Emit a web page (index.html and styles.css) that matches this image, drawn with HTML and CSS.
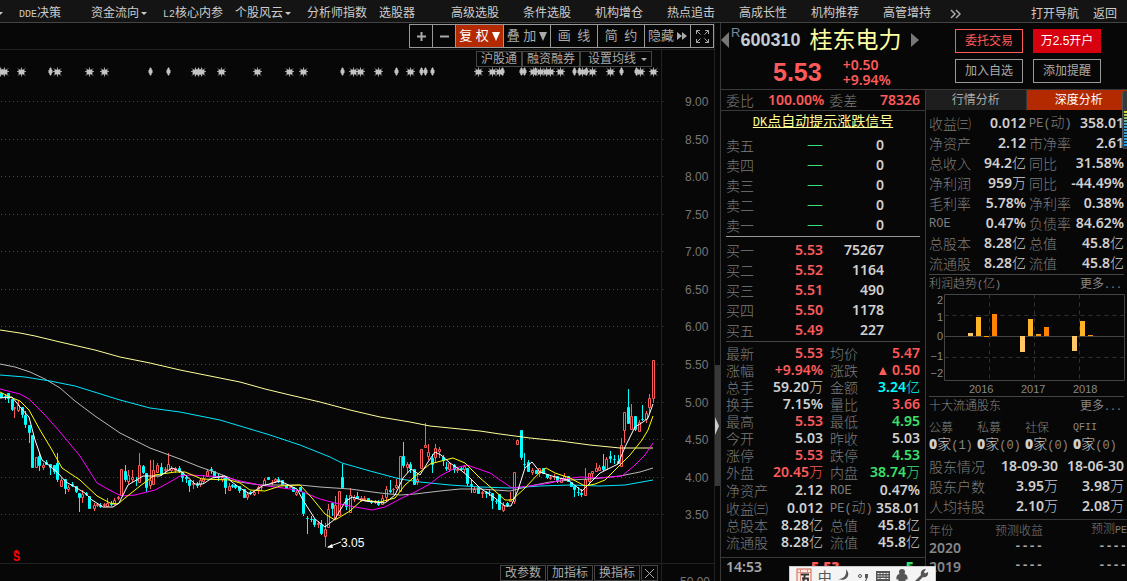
FILE: index.html
```html
<!DOCTYPE html>
<html lang="zh-CN">
<head>
<meta charset="utf-8">
<title>桂东电力 600310</title>
<link rel="stylesheet" href="styles.css">
</head>
<body>
<div class="app">
  <nav class="nav">
    <span class="nav-first caret"></span>
    <ul class="nav-list">
      <li><a href="#"><span class="en">DDE</span>决策</a></li>
      <li><a href="#">资金流向<i class="caret"></i></a></li>
      <li><a href="#"><span class="en">L2</span>核心内参</a></li>
      <li><a href="#">个股风云<i class="caret"></i></a></li>
      <li><a href="#">分析师指数</a></li>
      <li><a href="#">选股器</a></li>
      <li><a href="#">高级选股</a></li>
      <li><a href="#">条件选股</a></li>
      <li><a href="#">机构增仓</a></li>
      <li><a href="#">热点追击</a></li>
      <li><a href="#">高成长性</a></li>
      <li><a href="#">机构推荐</a></li>
      <li><a href="#">高管增持</a></li>
    </ul>
    <a class="nav-more" href="#" aria-label="更多">
      <svg width="11" height="10" viewBox="0 0 11 10"><path d="M1 1l4 4-4 4M6 1l4 4-4 4"/></svg>
    </a>
    <div class="nav-right"><a href="#">打开导航</a><a href="#">返回</a></div>
  </nav>

  <div class="main">
    <section class="chart">
      <div class="toolbar">
        <div class="tools">
          <button class="tool-s" aria-label="放大"><svg width="9" height="9" viewBox="0 0 9 9"><path class="ico2" d="M4.500 0v9M0 4.500h9"/></svg></button>
          <button class="tool-s" aria-label="缩小"><svg width="9" height="9" viewBox="0 0 9 9"><path class="ico2" d="M0 4.500h9"/></svg></button>
          <button class="tool-l on">复 权<i class="tri"></i></button>
          <button class="tool">叠 加<i class="tri"></i></button>
          <button class="tool">画&ensp;线</button>
          <button class="tool">简&ensp;约</button>
          <button class="tool-m">隐藏<svg width="10" height="8" viewBox="0 0 10 8"><path class="fill" d="M0 0l5 4-5 4zM5 0l5 4-5 4z"/></svg></button>
          <button class="tool-s" aria-label="全屏"><svg width="13" height="13" viewBox="0 0 13 13"><path class="ico1" d="M.5 4V.5H4M.5.5l4 4M9 .5h3.500V4M12.500.5l-4 4M.5 9v3.500H4M.5 12.500l4-4M9 12.500h3.500V9M12.500 12.500l-4-4"/></svg></button>
        </div>
      </div>
      <div class="chips-row">
        <div class="chips">
          <button class="chip">沪股通</button>
          <button class="chip">融资融券</button>
          <button class="chip wide">设置均线<i class="caret"></i></button>
        </div>
      </div>
      <svg class="plot" id="plot" viewBox="0 67 714 496" preserveAspectRatio="xMinYMin meet">
        <g id="grid"></g>
        <path class="axis" d="M661.500 67V563"/>
        <g id="labels"></g>
        <g id="stars"></g>
        <g id="candles"></g>
        <g class="ma">
          <polyline stroke="#ffff99" points="0,330 20,333 35,336 60,342 95,350 120,357 150,363 180,370 215,377 240,382 265,389 290,395 320,402 350,410 380,417 410,422 430,426 460,429 480,431 500,434 530,438 560,441 590,445 620,448 653,448"/>
          <polyline stroke="#b8b8b8" points="0,364 15,367 30,372 45,379 60,388 75,401 95,416 120,433 150,448 180,459 200,467 220,474 240,482 260,485 300,485 320,487 350,489 380,493 400,495 415,494 440,491 460,489 480,489 510,491 530,486 550,482 570,480 590,479 620,476 640,472 653,468"/>
          <polyline stroke="#00e5ff" points="0,375 25,377 50,381 75,386 120,400 150,408 180,412 220,420 240,426 270,435 300,445 330,457 342,463 370,471 400,479 420,482 450,485 480,487 510,488 540,486 570,485 600,486 625,485 653,480"/>
          <polyline stroke="#ff00ff" points="0,389 20,394 29,399 45,415 60,432 80,456 97,483 115,493 122,496 135,495 155,490 170,482 180,476 190,475 225,477 240,481 260,485 290,489 300,491 320,499 335,503 350,506 372,510 385,507 400,499 415,492 430,484 440,476 455,468 467,465 490,473 500,480 512,488 530,486 550,483 565,479 580,477 600,478 622,476 635,465 645,455 653,443"/>
          <polyline stroke="#ffff00" points="0,392 10,397 20,401 29,410 40,430 52,450 62,468 80,480 97,496 110,503 118,504 125,498 140,486 155,475 175,472 185,472 202,479 230,480 240,483 250,490 265,491 280,486 300,485 312,498 325,514 335,520 350,511 362,500 380,502 395,498 405,485 420,472 430,464 445,460 453,458 465,463 480,478 495,491 505,500 512,500 525,488 540,472 546,468 555,473 570,478 585,486 595,484 605,480 615,470 630,455 642,440 648,430 653,416"/>
          <polyline stroke="#ffffff" points="0,398 12,397 20,407 29,417 35,440 42,460 50,466 58,473 66,482 75,487 85,493 92,500 103,507 113,507 119,503 128,485 143,476 160,476 172,468 182,472 195,484 203,484 212,478 225,476 232,482 240,488 250,494 262,486 280,481 297,489 303,500 315,519 325,527 335,519 345,502 352,497 365,501 385,503 395,495 403,478 411,469 420,475 428,462 435,452 441,455 450,463 462,471 470,478 480,488 495,498 505,506 511,506 518,490 525,468 532,462 540,472 555,477 568,480 582,491 590,483 600,473 618,464 625,447 635,427 643,422 648,418 653,404"/>
        </g>
        <path class="low-line" d="M328 547l13-5"/><path class="low-head" d="M327 547.500l5-3.500 1 4z"/>
        <text class="low-text" x="341" y="547">3.05</text>
        <path class="sig-mark" d="M13 552.500l3.500-3 3.500 3z"/>
        <text class="sig" x="13" y="561">S</text>
      </svg>
      <div class="chart-foot">
        <div class="foot-btns">
          <button class="chip">改参数</button>
          <button class="chip">加指标</button>
          <button class="chip">换指标</button>
          <button class="chip close" aria-label="关闭"><svg width="9" height="9" viewBox="0 0 9 9"><path class="ico1" d="M0 0l9 9M9 0l-9 9"/></svg></button>
        </div>
        <div class="foot-axis">50.00</div>
      </div>
    </section>

    <div class="strip"><div class="thumb"><i class="thumb-arrow"></i></div></div>

    <section class="side">
      <header class="head">
        <svg class="prev" width="9" height="16" viewBox="0 0 9 16"><path d="M8 0v16L0 8z"/></svg>
        <div class="stock">
          <div class="stock-id"><sup>R</sup><span class="code">600310</span><h1>桂东电力</h1>
            <svg width="9" height="14" viewBox="0 0 9 14"><path d="M0 0v14l8-7z"/></svg></div>
          <div class="stock-px"><strong>5.53</strong><div class="chg"><div>+0.50</div><div>+9.94%</div></div></div>
        </div>
        <div class="actions">
          <button class="act red">委托交易</button><button class="act solid">万2.5开户</button>
          <button class="act">加入自选</button><button class="act">添加提醒</button>
        </div>
      </header>

      <div class="panels">
        <div class="quote">
          <div class="ratio"><span>委比</span><b class="up">100.00%</b><span class="second">委差</span><b class="up last">78326</b></div>
          <a class="dk" href="#"><span class="en">DK</span>点自动提示涨跌信号</a>
          <table class="book">
            <tr><th>卖五</th><td class="dash">—</td><td>0</td></tr>
            <tr><th>卖四</th><td class="dash">—</td><td>0</td></tr>
            <tr><th>卖三</th><td class="dash">—</td><td>0</td></tr>
            <tr><th>卖二</th><td class="dash">—</td><td>0</td></tr>
            <tr><th>卖一</th><td class="dash">—</td><td>0</td></tr>
          </table>
          <hr class="rule bright">
          <table class="book">
            <tr><th>买一</th><td class="up">5.53</td><td>75267</td></tr>
            <tr><th>买二</th><td class="up">5.52</td><td>1164</td></tr>
            <tr><th>买三</th><td class="up">5.51</td><td>490</td></tr>
            <tr><th>买四</th><td class="up">5.50</td><td>1178</td></tr>
            <tr><th>买五</th><td class="up">5.49</td><td>227</td></tr>
          </table>
          <hr class="rule">
          <table class="stats trade">
            <colgroup><col class="c1"><col class="c2"><col class="c3"><col></colgroup>
            <tr><th>最新</th><td class="up">5.53</td><th>均价</th><td class="up">5.47</td></tr>
            <tr><th>涨幅</th><td class="up">+9.94%</td><th>涨跌</th><td class="up"><i class="up-tri"></i>0.50</td></tr>
            <tr><th>总手</th><td>59.20<u>万</u></td><th>金额</th><td class="cy">3.24<u>亿</u></td></tr>
            <tr><th>换手</th><td>7.15%</td><th>量比</th><td class="up">3.66</td></tr>
            <tr><th>最高</th><td class="up">5.53</td><th>最低</th><td class="dn">4.95</td></tr>
            <tr><th>今开</th><td>5.03</td><th>昨收</th><td>5.03</td></tr>
            <tr><th>涨停</th><td class="up">5.53</td><th>跌停</th><td class="dn">4.53</td></tr>
            <tr><th>外盘</th><td class="up">20.45<u>万</u></td><th>内盘</th><td class="dn">38.74<u>万</u></td></tr>
            <tr><th>净资产</th><td>2.12</td><th><span class="en">ROE</span></th><td>0.47%</td></tr>
            <tr><th>收益㈢</th><td>0.012</td><th><span class="en">PE(</span>动<span class="en">)</span></th><td>358.01</td></tr>
            <tr><th>总股本</th><td>8.28<u>亿</u></td><th>总值</th><td>45.8<u>亿</u></td></tr>
            <tr><th>流通股</th><td>8.28<u>亿</u></td><th>流值</th><td>45.8<u>亿</u></td></tr>
          </table>
          <div class="tick"><span>14:53</span><b class="up">5.53</b><b class="dn">5</b></div>
        </div>

        <div class="deep">
          <div class="tabs"><button class="tab">行情分析</button><button class="tab on">深度分析</button></div>
          <table class="stats fin">
            <colgroup><col class="c1"><col class="c2"><col class="c3"><col></colgroup>
            <tr><th>收益㈢</th><td>0.012</td><th><span class="en">PE(</span>动<span class="en">)</span></th><td>358.01</td></tr>
            <tr><th>净资产</th><td>2.12</td><th>市净率</th><td>2.61</td></tr>
            <tr><th>总收入</th><td>94.2<u>亿</u></td><th>同比</th><td>31.58%</td></tr>
            <tr><th>净利润</th><td>959<u>万</u></td><th>同比</th><td>-44.49%</td></tr>
            <tr><th>毛利率</th><td>5.78%</td><th>净利率</th><td>0.38%</td></tr>
            <tr><th><span class="en">ROE</span></th><td>0.47%</td><th>负债率</th><td>84.62%</td></tr>
            <tr><th>总股本</th><td>8.28<u>亿</u></td><th>总值</th><td>45.8<u>亿</u></td></tr>
            <tr><th>流通股</th><td>8.28<u>亿</u></td><th>流值</th><td>45.8<u>亿</u></td></tr>
          </table>
          <div class="sub"><h2>利润趋势<span class="en">(</span>亿<span class="en">)</span></h2><a href="#">更多<span class="en">...</span></a></div>
          <svg class="profit" viewBox="0 0 201 102">
            <path class="frame" d="M18.500.5h180v86h-180zM18.500 42.500h180"/>
            <path class="dashes" d="M18.500 21.500h180M18.500 63.500h180M63.500.5v86M108.500.5v86M153.500.5v86"/>
            <g fill="#ffc864"><path d="M42 39h5v3h-5zM94 42h5v16h-5zM146 42h5v15h-5z"/></g>
            <g fill="#ffb428"><path d="M50 23h5v19h-5zM102 25h5v17h-5zM154 27h5v15h-5z"/></g>
            <g fill="#ff9b00"><path d="M58 42h5v1h-5zM110 40h5v2h-5zM162 41h5v1h-5z"/></g>
            <g fill="#ff8200"><path d="M66 20h5v22h-5zM118 33h5v9h-5z"/></g>
            <g text-anchor="end"><text x="17" y="10">2</text><text x="17" y="27">1</text><text x="17" y="46">0</text><text x="17" y="66">−1</text><text x="17" y="83">−2</text></g>
            <g><text x="43" y="99">2016</text><text x="95" y="99">2017</text><text x="147" y="99">2018</text></g>
          </svg>
          <div class="sub"><h2>十大流通股东</h2><a href="#">更多<span class="en">...</span></a></div>
          <table class="holders">
            <tr><th>公募</th><th>私募</th><th>社保</th><th><span class="en">QFII</span></th></tr>
            <tr><td><b>0</b><u>家</u><span class="en">(1)</span></td><td><b>0</b><u>家</u><span class="en">(0)</span></td><td><b>0</b><u>家</u><span class="en">(0)</span></td><td><b>0</b><u>家</u><span class="en">(0)</span></td></tr>
          </table>
          <table class="stats owners">
            <colgroup><col class="o1"><col class="o2"><col></colgroup>
            <tr><th>股东情况</th><td>18-09-30</td><td>18-06-30</td></tr>
            <tr><th>股东户数</th><td>3.95<u>万</u></td><td>3.98<u>万</u></td></tr>
            <tr><th>人均持股</th><td>2.10<u>万</u></td><td>2.08<u>万</u></td></tr>
          </table>
          <table class="forecast">
            <colgroup><col class="f1"><col class="f2"><col></colgroup>
            <tr><th>年份</th><th>预测收益</th><th>预测<span class="en">PE</span></th></tr>
            <tr><td>2020</td><td class="none">----</td><td class="none">----</td></tr>
            <tr><td>2019</td><td class="none">----</td><td class="none">----</td></tr>
          </table>
        </div>
      </div>
    </section>
  </div>

  <div class="gauge"><i></i></div>

  <div class="ime">
    <svg width="16" height="16" viewBox="0 0 16 16"><rect x="1" y="1" width="14" height="15" fill="#fbe9e4" stroke="#d9604a"/><path d="M1 4.500h14M4.500 1v15M11.500 1v3.500" stroke="#e09080" fill="none"/><path d="M5 6.500h8M9 6.500l-2 8M6 10.500h6v5" stroke="#333" stroke-width="1.800" fill="none"/></svg>
    <span class="ime-zh">中</span>
    <svg width="14" height="14" viewBox="0 0 14 14"><path d="M9 1c6 7-1 13-8 10C7 11 10 7 9 1z"/></svg>
    <svg width="12" height="14" viewBox="0 0 12 14"><circle cx="3" cy="8" r="1.500" fill="none" stroke="#555"/><path d="M8 6h3v3l-2 4H8l1-3H8z"/></svg>
    <svg width="16" height="14" viewBox="0 0 16 14"><path fill-rule="evenodd" d="M1 3h14v11H1zM2.500 5v1h2V5zm3 0v1h2V5zm3 0v1h2V5zm3 0v1h2V5zm-9 2.500v1h2v-1zm3 0v1h2v-1zm3 0v1h2v-1zm3 0v1h2v-1zM2.500 10v1h2v-1zm3 0v1h5v-1zm6 0v1h2v-1z"/></svg>
    <svg width="12" height="15" viewBox="0 0 12 15"><circle cx="6" cy="4" r="3"/><path d="M4 6h4c3 0 4 3 3.500 5.500h-2V15h-7v-3.500h-2C0 9 1 6 4 6z"/></svg>
    <svg width="15" height="15" viewBox="0 0 15 15"><path d="M1 13l6-6c-1-3 1-6 5-6l-2 3 1 1.500L14 4c1 4-3 6-5 5l-6 6z"/></svg>
  </div>
</div>
<script src="chart.js"></script>
</body>
</html>
```
FILE: styles.css
```css
* { box-sizing: border-box; }
body {
  margin: 0;
  background: #070707;
  color: #d0d0d0;
  font: 12px/20px "Liberation Sans", "Noto Sans CJK SC", sans-serif;
}
.app { position: relative; height: 100vh; overflow: hidden; display: flex; flex-direction: column; }
a { color: inherit; text-decoration: none; }
u, i { text-decoration: none; font-style: normal; }
button { font: inherit; color: inherit; background: none; border: 0; padding: 0; white-space: nowrap; }
.en { font-family: "Liberation Mono", "Noto Sans CJK SC", monospace; font-size: 10px; }
.caret { display: inline-block; border: 3px solid transparent; border-top-color: currentColor; border-bottom: 0; vertical-align: middle; margin-left: 2px; }

/* top navigation */
.nav { flex: none; display: flex; height: 23px; padding-top: 5px; background: #141414; border-bottom: 1px solid #444; color: #ccc; align-items: center; white-space: nowrap; }
.nav-first { width: 6px; margin: 0 14px 0 -3px; }
.nav-list { display: flex; margin: 0 0 0 2px; padding: 0; list-style: none; }
.nav-list li { width: 72px; }
.nav-more { margin-left: -5px; display: flex; }
.nav-more svg { fill: none; stroke: #aaa; stroke-width: 1.500; }
.nav-right { margin-left: auto; display: flex; gap: 14px; padding-right: 10px; }

.main { flex: 1; min-height: 0; display: grid; grid-template-columns: minmax(0, 1fr) 5px 407px; }

/* chart */
.chart { display: flex; flex-direction: column; min-width: 0; min-height: 0; border-right: 1px solid #222; }
.toolbar { flex: none; display: flex; justify-content: flex-end; height: 27px; padding-top: 1px; border-bottom: 1px solid #222; }
.tools { display: flex; height: 24px; border: 1px solid #999; border-right: 0; color: #aaa; font-size: 13px; }
.tools button { display: flex; align-items: center; justify-content: center; gap: 3px; border-right: 1px solid #999; }
.tool-s { width: 23px; }
.tool { width: 47px; }
.tool-m { width: 46px; }
.tool-l { width: 48px; }
.tools .on { background: #b42a00; color: #fff; }
.tri { border: 4px solid transparent; border-top: 9px solid currentColor; border-bottom: 0; }
.ico1 { fill: none; stroke: currentColor; }
.ico2 { fill: none; stroke: currentColor; stroke-width: 2; }
.fill { fill: currentColor; }
.chips-row { flex: none; display: flex; height: 17px; padding-right: 52px; }
.chips { flex: 1; display: flex; justify-content: flex-end; padding: 1px 9px 0 0; border-right: 1px solid #222; }
.chip { height: 16px; padding: 0 4px; border: 1px solid #444; color: #aaa; line-height: 14px; }
.chip.wide { padding: 0 4px 0 7px; }
.wide .caret { margin-left: 5px; }
.plot { flex: 1; min-height: 0; width: 100%; display: block; }
.axis { stroke: #222; }
.grid-line { stroke: #4a4a4a; stroke-dasharray: 1 3; }
.price { fill: #777; font-size: 12px; }
.ma polyline { fill: none; stroke-width: 1; }
.up-c { stroke: #ff5a5a; fill: #070707; }
.dn-c { stroke: #00ffff; fill: #00ffff; }
.star { fill: #c4c4c4; stroke: #c4c4c4; }
.low-line { stroke: #fff; }
.low-head { fill: #fff; }
.low-text { fill: #fff; font-size: 12px; }
.sig { fill: #f00; font: bold 12px "Liberation Mono", monospace; }
.sig-mark { fill: #f00; }
.chart-foot { flex: none; display: flex; height: 18px; border-top: 1px solid #222; overflow: hidden; }
.foot-btns { flex: 1; display: flex; justify-content: flex-end; gap: 1px; padding: 1px 3px 0 0; border-right: 1px solid #222; }
.chip.close { padding: 0 3px; display: flex; align-items: center; }
.foot-axis { width: 52px; padding: 8px 4px 0 0; text-align: right; color: #777; }
.strip { display: grid; grid-template-rows: 342fr 121fr 95fr; }
.thumb { grid-row: 2; background: #383838; display: flex; align-items: center; }
.thumb-arrow { border: 9px solid transparent; border-left: 4px solid #ccc; border-right: 0; }

/* right side */
.side { display: flex; flex-direction: column; min-height: 0; border-left: 1px solid #383838; }
.head { flex: none; display: flex; height: 67px; border-bottom: 1px solid #383838; }
.head svg { fill: #777; }
.prev { flex: none; margin-top: 9px; }
.stock { flex: 1; padding-left: 1px; }
.stock-id { display: flex; align-items: center; height: 34px; }
.stock-id sup { font-size: 13px; line-height: 13px; color: #7a8a99; align-self: flex-start; margin-top: 3px; }
.code { font-size: 18px; font-weight: bold; color: #c4ccd4; }
.stock-id h1 { margin: 0 10px 0 9px; font-size: 23px; font-weight: normal; color: #ffffa0; }
.stock-px { display: flex; align-items: center; padding-left: 42px; color: #ff5a5a; }
.stock-px strong { font-size: 25px; line-height: 30px; }
.chg { margin-left: 21px; font: 600 14px/15px "Noto Sans", sans-serif; }
.actions { display: grid; grid-template-columns: 68px 68px; grid-template-rows: 24px 24px; gap: 6px 10px; padding: 6px 26px 0 0; }
.act { border: 1px solid #999; color: #aaa; }
.act.red { border-color: #ff5a5a; color: #ff5a5a; }
.act.solid { border-color: #d7000f; background: #d7000f; color: #fff; }
.panels { flex: 1; min-height: 0; display: grid; grid-template-columns: 205px minmax(0, 1fr); }

.up { color: #ff5a5a; }
.dn { color: #3ce06e; }
.cy { color: #00ffff; }
table { border-collapse: collapse; table-layout: fixed; width: 100%; }
th, td { padding: 0; white-space: nowrap; }
th { font: 300 14px/15px "Noto Sans CJK SC", sans-serif; color: #7d7d7d; text-align: left; }
td { padding-bottom: 2px; text-align: right; font: 600 14px/15px "Noto Sans", "Noto Sans CJK SC", sans-serif; }
td u { font: 300 14px/15px "Noto Sans CJK SC", sans-serif; }
th .en, td .en { font: 300 12px/15px "Liberation Mono", monospace; }

/* order book and trade figures */
.quote { border-right: 1px solid #383838; }
.ratio { display: flex; height: 21px; padding: 0 5px; border-bottom: 1px solid #383838; font: 300 14px/20px "Noto Sans CJK SC", sans-serif; color: #7d7d7d; }
.ratio b { font: 600 14px/20px "Noto Sans", sans-serif; }
.ratio b:nth-child(2) { margin-left: 14px; }
.ratio .second { margin-left: 5px; }
.ratio .last { margin-left: auto; }
.dk { display: block; height: 24px; text-align: center; font-size: 14px; color: #ffff99; text-decoration: underline; }
.dk .en { font-size: 12px; }
.book { width: 158px; margin: 0 5px; }
.book tr { height: 20px; }
.book th { width: 35px; }
.book td:nth-child(2) { width: 62px; }
td.dash { color: #3ce06e; font-weight: 300; font-size: 16px; }
.rule { margin: 1px 5px 3px; border: 0; border-top: 1px solid #444; }
.rule.bright { border-color: #999; }
.stats tr { height: 17px; }
.trade { width: 194px; margin: 0 5px 6px; }
.c1 { width: 35px; }
.c2 { width: 62px; }
.c3 { width: 42px; }
.trade th:nth-child(3) { padding-left: 7px; }
.up-tri { display: inline-block; border: 4px solid transparent; border-bottom: 8px solid #ff5a5a; border-top: 0; margin-right: 5px; }
.tick { display: flex; height: 20px; padding: 0 5px; border-top: 1px solid #383838; font: 600 14px/18px "Noto Sans", sans-serif; }
.tick span { color: #a8a8a8; }
.tick .up { margin-left: 49px; }
.tick .dn { margin: 0 6px 0 auto; }

/* fundamentals */
.deep { min-width: 0; }
.tabs { display: grid; grid-template-columns: 1fr 1fr; height: 20px; border-bottom: 1px solid #383838; }
.tab { background: #1e1e1e; color: #aaa; border-right: 1px solid #383838; }
.tab.on { padding-left: 4px; background: #b42a00; color: #fff; border-right: 0; }
.deep .stats { width: 195px; margin: 3px 3px 1px; }
.deep .stats tr { height: 20px; }
.fin .c3 { width: 38px; }
.fin th:nth-child(3) { padding-left: 3px; }
.sub { display: flex; justify-content: space-between; height: 20px; margin: 0 3px; padding-right: 2px; border-top: 1px solid #444; color: #888; line-height: 19px; }
.sub h2 { margin: 0; font-size: 12px; font-weight: 300; }
.profit { display: block; width: 100%; }
.profit text { font-size: 11px; fill: #888; }
.frame { fill: none; stroke: #444; }
.dashes { fill: none; stroke: #333; stroke-dasharray: 4 4; }
.holders { width: 192px; margin: 0 3px; }
.holders tr { height: 20px; }
.holders th { font-size: 12px; }
.holders .en { color: #888; }
.holders th .en { font-size: 10px; }
.holders td { text-align: left; }
.deep .owners { margin: 0 3px 3px; }
.o1 { width: 65px; }
.o2 { width: 64px; }
.forecast { border-top: 1px solid #383838; }
.forecast tr { height: 19px; }
.forecast th { font-size: 12px; text-align: right; }
.forecast th .en { font-size: 10px; }
.forecast td { color: #888; }
.forecast .none { font: bold 12px/15px "Liberation Mono", monospace; color: #aaa; }
.forecast th:first-child, .forecast td:first-child { padding-left: 3px; text-align: left; }
.f1 { width: 43px; }
.f2 { width: 74px; }

/* floating overlays */
.gauge { position: absolute; right: 0; top: 91px; width: 5px; height: 58px; padding: 20px 0 2px 1px; background: #333a40; border-left: 1px solid #555; border-radius: 3px 0 0 3px; }
.gauge i { display: block; height: 100%; background: repeating-linear-gradient(transparent 0 2px, #222 2px 3px), linear-gradient(#e0e020, #40a0d0 40%, #20a0f0); }
.ime { position: absolute; left: 789px; bottom: 0; width: 147px; height: 15px; padding: 1px 6px 0; display: flex; align-items: flex-start; justify-content: space-between; overflow: hidden; background: #f4f4f4; border: 1px solid #ccc; border-bottom: 0; color: #555; }
.ime svg { flex: none; fill: #555; }
.ime-zh { font: 14px/16px "Noto Sans CJK SC", sans-serif; }
```
FILE: chart.js
```javascript
const NS = 'http://www.w3.org/2000/svg';
const add = (id, tag, attrs, text) => {
  const el = document.createElementNS(NS, tag);
  for (const k in attrs) el.setAttribute(k, attrs[k]);
  if (text) el.textContent = text;
  document.getElementById(id).appendChild(el);
};

// horizontal price levels
const levels = [101, 139, 176, 214, 251, 289, 326, 364, 402, 439, 477, 514];
levels.forEach((y, i) => {
  add('grid', 'path', { class: 'grid-line', d: `M1 ${y}.5H660` });
  add('grid', 'path', { class: 'axis', d: `M661 ${y}.5h3` });
  add('labels', 'text', { class: 'price', x: 685, y: y + 5 }, (9 - i * 0.5).toFixed(2));
});

// event markers
const stars = [0, 4, 21, 57, 89, 104, 195, 198, 201, 221, 257, 289, 303, 353, 360, 378, 410, 478, 492, 499, 533, 540, 546, 550, 560, 582, 592, 610, 640, 653];
const bars = [50, 150, 168, 342, 396, 421, 425, 432, 502, 521, 524, 535, 574, 579, 586, 621, 636];
stars.forEach(x => add('stars', 'path', { class: 'star', d: `M${x - 2} 70h5v4h-5zM${x - 4} 71.500h9M${x + .5} 67.500v9M${x - 3} 68.500l7 7M${x + 4} 68.500l-7 7`, 'stroke-width': .8 }));
bars.forEach(x => add('stars', 'path', { class: 'star', d: `M${x} 68h1v7h-1zM${x - 1} 70h3v3h-3z` }));

// candles: x, high, low, body top, body bottom, rising
const D = [
[1,393,398,393,398,0],[5,394,400,396,397,0],[8,393,403,393,399,0],[12,399,411,399,410,0],[14,407,418,407,409,1],[18,401,412,405,411,1],[22,407,418,407,415,0],[25,411,428,415,425,0],[29,425,443,425,433,0],[32,435,468,435,468,0],[36,457,468,457,468,1],[39,453,471,456,466,0],[43,463,470,465,468,1],[46,460,465,462,465,0],[50,464,475,464,468,0],[54,465,474,465,472,0],[57,453,482,463,480,0],[61,478,487,480,487,1],[65,479,494,479,489,0],[68,485,492,487,490,1],[72,482,487,484,486,0],[76,486,493,486,492,0],[79,493,512,493,498,0],[82,490,503,494,498,1],[86,492,496,493,495,0],[89,496,509,496,509,0],[94,503,511,505,509,1],[97,503,507,504,506,1],[100,503,508,505,507,0],[104,503,507,504,506,1],[107,498,507,503,507,1],[111,501,506,503,505,0],[114,498,505,500,505,1],[118,496,500,497,499,1],[121,469,496,469,496,1],[125,465,482,471,480,0],[128,470,484,475,482,1],[132,470,482,477,480,1],[136,477,486,480,481,0],[139,453,483,465,483,1],[143,465,474,466,473,0],[146,473,492,473,488,0],[150,460,489,480,486,1],[153,460,485,470,485,1],[157,463,473,465,473,1],[161,463,476,467,475,0],[165,467,474,469,471,1],[168,453,471,464,471,1],[171,466,472,468,471,1],[175,467,473,468,471,1],[179,466,473,468,472,0],[182,472,482,472,478,0],[186,475,483,477,479,0],[189,480,492,480,486,0],[193,480,489,483,485,1],[197,482,488,484,486,0],[200,478,487,480,485,1],[203,475,484,478,482,1],[207,469,477,471,477,1],[211,467,474,469,471,0],[214,471,477,471,477,0],[218,474,481,476,478,0],[222,475,482,477,480,1],[225,477,494,477,488,0],[229,483,491,486,491,1],[232,484,488,485,487,0],[235,484,489,485,488,0],[239,486,493,486,491,0],
[244,489,498,489,498,0],[247,492,500,494,498,1],[250,491,495,492,494,0],[254,491,496,492,495,1],[258,486,494,487,490,1],[261,486,491,487,488,1],[264,478,486,480,486,1],[268,477,480,477,480,0],[272,480,485,482,483,1],[275,478,483,479,482,1],[278,477,483,479,482,0],[282,480,485,480,485,0],[286,485,489,485,489,0],[290,485,488,486,488,1],[293,487,492,487,492,0],[296,490,496,492,495,1],[300,487,492,487,492,0],[303,492,516,492,514,0],[307,516,534,518,519,0],[311,516,522,519,520,0],[314,519,527,519,525,0],[318,521,528,523,525,1],[321,520,535,524,534,0],[325,523,547,529,537,1],[328,504,528,509,528,1],[332,502,516,503,509,0],[335,496,519,505,519,1],[339,491,516,491,516,1],[342,464,488,477,488,0],[346,495,510,498,507,0],[350,488,513,495,513,1],[354,495,502,497,500,1],[357,492,499,496,499,0],[361,496,502,498,501,1],[364,496,501,498,500,1],[368,498,502,498,502,0],[371,500,504,502,503,0],[375,500,504,501,503,1],[378,500,506,502,505,0],[382,495,505,498,505,1],[386,486,502,489,498,1],[390,480,493,490,492,0],[393,488,494,489,490,1],[396,479,489,485,488,1],[400,456,492,456,492,1],[403,442,468,456,466,0],[407,462,473,464,468,1],[410,462,473,464,469,0],[414,469,485,469,485,0],[417,473,485,479,483,1],[421,449,469,449,469,1],[425,423,448,445,448,1],[428,444,460,452,457,1],[432,454,473,458,465,0],[435,444,462,448,458,1],[439,447,458,449,452,1],[443,455,466,457,461,0],[446,462,471,467,469,0],[449,463,472,463,470,1],[454,464,473,465,470,0],[457,467,473,469,471,1],[461,467,471,468,470,0],[464,465,473,466,470,1],[467,468,486,468,484,0],[471,480,493,484,486,0],[474,487,493,489,493,1],[478,487,494,487,494,0],
[482,491,498,492,494,1],[486,491,498,492,494,0],[489,489,496,492,493,0],[492,493,509,493,501,0],[496,499,504,501,502,0],[499,494,510,494,510,0],[503,502,512,505,511,1],[507,502,507,503,506,0],[510,492,502,499,502,1],[514,472,504,472,502,1],[517,440,445,440,445,1],[521,430,460,430,458,0],[524,453,468,464,465,0],[528,460,472,462,472,0],[532,468,475,470,473,1],[536,470,474,470,474,0],[539,468,477,468,474,1],[543,468,474,468,474,0],[547,474,479,474,478,0],[550,476,480,477,479,1],[554,474,480,476,477,1],[557,476,483,476,481,0],[561,478,483,478,483,1],[564,473,480,476,479,1],[568,476,482,476,482,0],[571,482,487,482,487,0],[574,486,497,486,490,0],[578,487,496,492,493,0],[581,489,497,493,495,0],[585,468,496,479,496,1],[589,473,485,473,482,1],[592,471,477,471,474,1],[596,463,472,468,472,1],[599,465,471,467,471,1],[603,454,471,466,470,0],[606,457,470,459,470,1],[610,451,463,456,459,0],[614,455,464,459,460,0],[618,455,464,461,464,0],[621,438,467,445,467,1],[624,412,443,412,431,1],[628,389,424,407,424,0],[631,404,430,416,430,1],[635,416,431,416,430,0],[639,420,432,422,432,1],[642,405,421,419,420,0],[646,411,423,413,420,1],[649,394,413,398,408,1],[653,360,403,360,399,1]];
D.forEach(([x, h, l, t, b, up]) => {
  add('candles', 'path', { class: up ? 'up-c' : 'dn-c', d: `M${x + .5} ${h}V${t}M${x + .5} ${b}V${l}M${x - .5} ${t + .5}h2V${b - .5}h-2z` });
});
```
